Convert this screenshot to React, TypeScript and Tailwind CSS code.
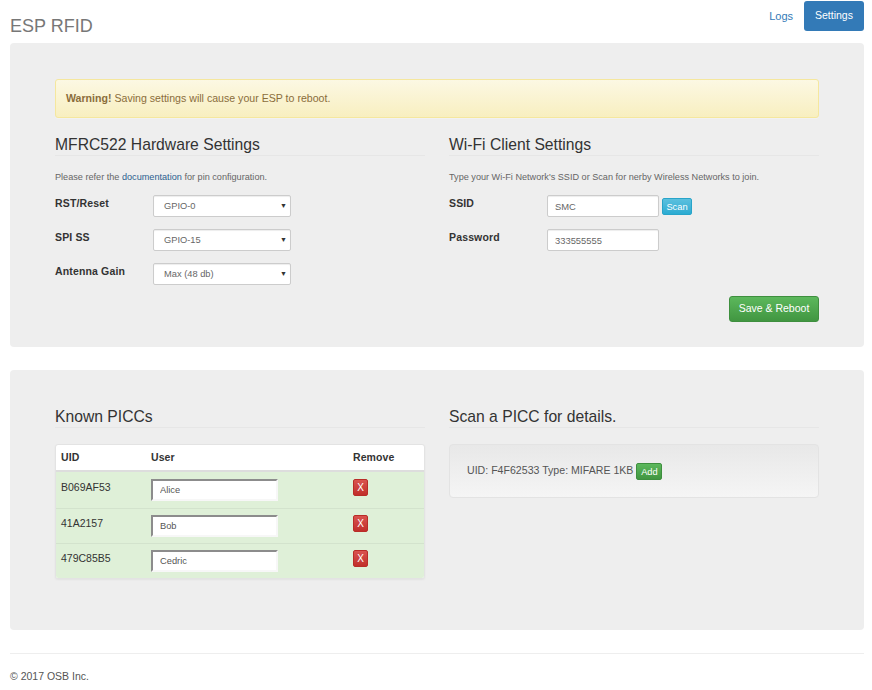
import React from 'react';

const font = { sans: 'font-["Liberation_Sans",Arial,sans-serif]' };

const SectionTitle = ({ children }: { children: React.ReactNode }) => (
  <h3 className="h-[22px] border-b border-[#e6e6e6] pt-[2px] text-[15.7px] leading-[18px] text-[#333]">{children}</h3>
);

const FieldLabel = ({ children }: { children: React.ReactNode }) => (
  <label className="w-[98px] shrink-0 pt-[1px] text-[10.5px] leading-[14px] font-bold tracking-[0.15px] text-[#333]">{children}</label>
);

const SelectBox = ({ value }: { value: string }) => (
  <div className="flex h-[22px] w-[138px] items-center justify-between rounded-[2px] border border-[#ccc] bg-white pl-[10px] pr-[3px] text-[9.3px] text-[#666] shadow-[inset_0_1px_1px_rgba(0,0,0,0.075)]">
    <span className="pt-[1px]">{value}</span>
    <span className="text-[7px] text-[#333]">▼</span>
  </div>
);

const TextBox = ({ value }: { value: string }) => (
  <input
    readOnly
    value={value}
    className="h-[22px] w-[112px] rounded-[2px] border border-[#ccc] bg-white px-[7px] text-[9.4px] text-[#666] shadow-[inset_0_1px_1px_rgba(0,0,0,0.075)] outline-none"
  />
);

const rows = [
  { uid: 'B069AF53', user: 'Alice', box: 'h-[36px] pt-[7px]' },
  { uid: '41A2157', user: 'Bob', box: 'h-[35px] pt-[6px] border-t border-[#d3e3cd]' },
  { uid: '479C85B5', user: 'Cedric', box: 'h-[35px] pt-[6px] border-t border-[#d3e3cd]' },
];

export default function App() {
  return (
    <div className={`${font.sans} min-h-[690px] bg-white pl-[10px] pr-[8px] text-[#333]`}>
      <header className="flex h-[43px] items-start justify-between">
        <h1 className="pt-[16px] text-[18px] leading-[20px] text-[#777]">ESP RFID</h1>
        <nav className="flex items-start pt-[1px]">
          <a className="pt-[9px] pr-[11px] text-[11px] leading-[12px] text-[#337ab7]">Logs</a>
          <a className="flex h-[30px] w-[60px] items-center justify-center rounded-[3px] bg-[#337ab7] text-[10.5px] text-white">Settings</a>
        </nav>
      </header>

      <section className="h-[304px] rounded-[4px] bg-[#eeeeee] px-[45px] pt-[36px]">
        <div className="flex h-[39px] items-center rounded-[3px] border border-[#f5e79e] bg-gradient-to-b from-[#fcf8e3] to-[#f8efc0] px-[10px] text-[10.6px] text-[#8a6d3b] shadow-[0_1px_0_rgba(255,255,255,0.25)]">
          <span><b>Warning!</b> Saving settings will cause your ESP to reboot.</span>
        </div>

        <div className="mt-[16px] grid grid-cols-[370px_370px] gap-x-[24px]">
          <div>
            <SectionTitle>MFRC522 Hardware Settings</SectionTitle>
            <p className="mt-[14px] h-[25px] text-[9.15px] leading-[14px] text-[#666]">
              Please refer the <a className="text-[#2c5f8f]">documentation</a> for pin configuration.
            </p>
            <div className="flex h-[34px]"><FieldLabel>RST/Reset</FieldLabel><SelectBox value="GPIO-0" /></div>
            <div className="flex h-[34px]"><FieldLabel>SPI SS</FieldLabel><SelectBox value="GPIO-15" /></div>
            <div className="flex h-[34px]"><FieldLabel>Antenna Gain</FieldLabel><SelectBox value="Max (48 db)" /></div>
          </div>

          <div>
            <SectionTitle>Wi-Fi Client Settings</SectionTitle>
            <p className="mt-[14px] h-[25px] text-[9.15px] leading-[14px] text-[#666]">
              Type your Wi-Fi Network's SSID or Scan for nerby Wireless Networks to join.
            </p>
            <div className="flex h-[34px]">
              <FieldLabel>SSID</FieldLabel>
              <TextBox value="SMC" />
              <button className="mt-[3px] ml-[3px] h-[17px] w-[30px] rounded-[2px] border border-[#28a4c9] bg-gradient-to-b from-[#5bc0de] to-[#2aabd2] text-[9.3px] leading-[14px] text-white">Scan</button>
            </div>
            <div className="flex h-[34px]">
              <FieldLabel>Password</FieldLabel>
              <TextBox value="333555555" />
            </div>
            <div className="mt-[33px] flex justify-end">
              <button className="h-[26px] w-[90px] rounded-[3px] border border-[#3e8f3e] bg-gradient-to-b from-[#5cb85c] to-[#419641] text-[10.5px] text-white">Save &amp; Reboot</button>
            </div>
          </div>
        </div>
      </section>

      <section className="mt-[23px] h-[260px] rounded-[4px] bg-[#eeeeee] px-[45px] pt-[36px]">
        <div className="grid grid-cols-[370px_370px] gap-x-[24px]">
          <div>
            <SectionTitle>Known PICCs</SectionTitle>
            <div className="mt-[16px] overflow-hidden rounded-[3px] border border-[#e3e3e3] bg-white shadow-[0_1px_2px_rgba(0,0,0,0.05)]">
              <div className="flex h-[27px] items-center border-b-2 border-[#ddd] pt-[1px] text-[10.5px] font-bold tracking-[0.1px]">
                <span className="w-[95px] pl-[5px]">UID</span>
                <span className="w-[202px]">User</span>
                <span>Remove</span>
              </div>
              {rows.map((row) => (
                <div key={row.uid} className={`flex ${row.box} bg-[#dff0d8]`}>
                  <span className="w-[95px] pl-[5px] pt-[1px] text-[10.5px] leading-[14px]">{row.uid}</span>
                  <div className="w-[202px]">
                    <input
                      readOnly
                      value={row.user}
                      className="block h-[22px] w-[127px] border-2 border-[#f7f7f7] border-t-[#8c8c8c] border-l-[#8c8c8c] bg-white px-[7px] text-[9.3px] text-[#555] outline-none"
                    />
                  </div>
                  <button className="block h-[17px] w-[15px] rounded-[2px] border border-[#b92c28] bg-gradient-to-b from-[#d9534f] to-[#c12e2a] text-[10px] leading-[14px] text-white">X</button>
                </div>
              ))}
            </div>
          </div>

          <div>
            <SectionTitle>Scan a PICC for details.</SectionTitle>
            <div className="mt-[16px] flex h-[54px] items-center rounded-[4px] border border-[#e3e3e3] bg-gradient-to-b from-[#e8e8e8] to-[#f5f5f5] pl-[17px] text-[10.6px] text-[#555]">
              <span>UID: F4F62533 Type: MIFARE 1KB</span>
              <button className="mt-[1px] ml-[3px] h-[17px] w-[26px] rounded-[2px] border border-[#3e8f3e] bg-gradient-to-b from-[#5cb85c] to-[#419641] text-[9.3px] leading-[14px] text-white">Add</button>
            </div>
          </div>
        </div>
      </section>

      <footer className="mt-[23px] border-t border-[#eee] pt-[15px] text-[10.5px] leading-[14px] text-[#555]">
        © 2017 OSB Inc.
      </footer>
    </div>
  );
}
